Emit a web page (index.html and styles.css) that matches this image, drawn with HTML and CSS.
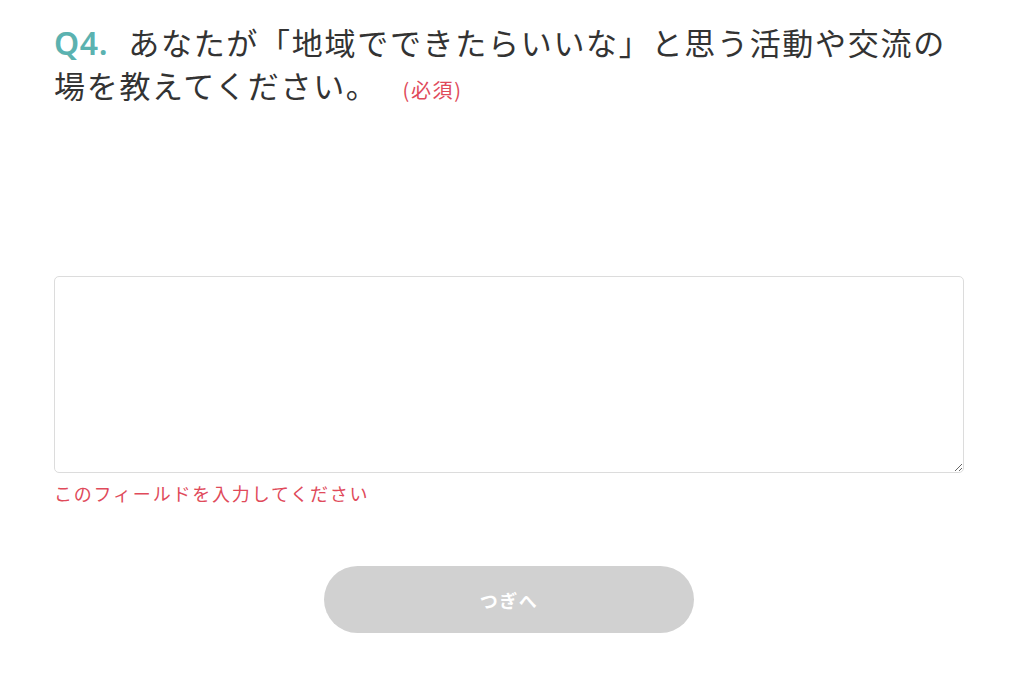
FILE: index.html
```html
<!DOCTYPE html>
<html lang="ja">
<head>
    <meta charset="UTF-8">
    <meta name="viewport" content="width=device-width, initial-scale=1.0">
    <title>アンケート Q4</title>
    <link rel="stylesheet" href="styles.css">
</head>
<body>
    <div class="container">
        <h2 class="question">
            <span class="q-num">Q4.</span>あなたが「地域でできたらいいな」と思う活動や交流の場を教えてください。<span class="required">(必須)</span>
        </h2>

        <div class="field">
            <textarea class="answer" required></textarea>
            <p class="error">このフィールドを入力してください</p>
        </div>

        <div class="actions">
            <button class="next-btn" type="button" disabled>つぎへ</button>
        </div>
    </div>
</body>
</html>
```

FILE: styles.css
```css
body {
    margin: 0;
    padding: 0;
    background: #fff;
    color: #333;
    font-family: "Noto Sans CJK JP", "Noto Sans", sans-serif;
}
.container {
    padding: 20px 60px 0 54px;
}
.question {
    margin: 0;
    height: 86px;
    font-size: 31px;
    font-weight: normal;
    line-height: 43px;
    letter-spacing: 0.055em;
    color: #333;
}
.q-num {
    color: #5bb2b0;
    font-family: "Noto Sans", sans-serif;
    font-size: 32px;
    font-weight: 600;
    line-height: 1;
    letter-spacing: 0.02em;
    margin-right: 20px;
}
.required {
    color: #e04a5a;
    font-size: 20px;
    line-height: 1;
    letter-spacing: 0.08em;
    margin-left: 24px;
}
.field {
    margin-top: 170px;
}
.answer {
    display: block;
    box-sizing: border-box;
    width: 100%;
    height: 197px;
    margin: 0;
    padding: 10px;
    border: 1px solid #dcdcdc;
    border-radius: 5px;
    background: #fff;
    font-family: inherit;
    font-size: 16px;
    resize: vertical;
    outline: none;
}
.error {
    margin: 6px 0 0 0;
    color: #e04a5a;
    font-size: 18px;
    line-height: 28px;
    letter-spacing: 0.1em;
}
.actions {
    display: flex;
    justify-content: center;
    margin-top: 59px;
}
.next-btn {
    width: 370px;
    height: 67px;
    border: none;
    border-radius: 34px;
    background: #d1d1d1;
    color: #fff;
    font-family: inherit;
    font-size: 18px;
    font-weight: bold;
    letter-spacing: 0.08em;
}
```
